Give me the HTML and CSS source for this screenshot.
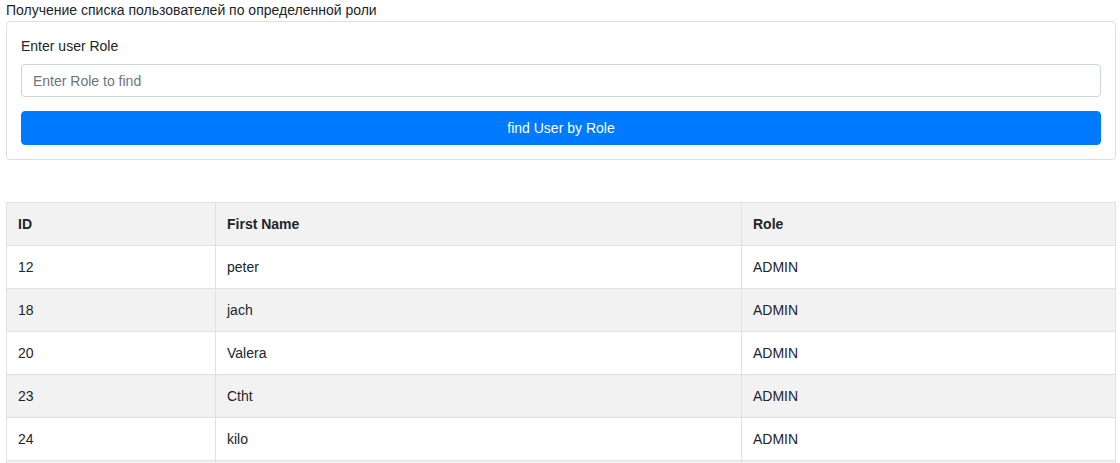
FILE: index.html
```html
<!DOCTYPE html>
<html lang="ru">
<head>
<meta charset="utf-8">
<title>Users by role</title>
<link rel="stylesheet" href="styles.css">
</head>
<body>
<div class="page">
  <div class="title">Получение списка пользователей по определенной роли</div>
  <div class="card">
    <div class="form-group">
      <label class="label" for="role">Enter user Role</label>
      <input class="input" id="role" type="text" placeholder="Enter Role to find">
    </div>
    <button class="btn" type="button">find User by Role</button>
  </div>
  <table class="table">
    <thead>
      <tr><th class="c1">ID</th><th class="c2">First Name</th><th class="c3">Role</th></tr>
    </thead>
    <tbody>
      <tr><td>12</td><td>peter</td><td>ADMIN</td></tr>
      <tr><td>18</td><td>jach</td><td>ADMIN</td></tr>
      <tr><td>20</td><td>Valera</td><td>ADMIN</td></tr>
      <tr><td>23</td><td>Ctht</td><td>ADMIN</td></tr>
      <tr><td>24</td><td>kilo</td><td>ADMIN</td></tr>
      <tr><td>25</td><td>test</td><td>ADMIN</td></tr>
    </tbody>
  </table>
</div>
</body>
</html>
```

FILE: styles.css
```css
html { font-size: 14px; }
* { box-sizing: border-box; }
body {
  margin: 0;
  font-family: "Liberation Sans", Arial, sans-serif;
  font-size: 14px;
  line-height: 1.5;
  color: #212529;
  background: #fff;
}
.page {
  padding: 0 6px;
  width: 1120px;
}
.title {
  line-height: 21px;
  color: #212529;
}
.card {
  width: 1110px;
  border: 1px solid #dcdfe3;
  border-radius: 4px;
  padding: 14px;
}
.form-group {
  margin-bottom: 14px;
}
.label {
  display: block;
  margin-bottom: 7px;
  line-height: 21px;
}
.input {
  display: block;
  width: 100%;
  height: 33px;
  padding: 5px 11px;
  font-family: inherit;
  font-size: 14px;
  color: #495057;
  border: 1px solid #ced4da;
  border-radius: 4px;
  background: #fff;
}
.input::placeholder { color: #6c757d; opacity: 1; }
.btn {
  display: block;
  width: 100%;
  height: 34px;
  border: 1px solid #007bff;
  background: #007bff;
  color: #fff;
  font-family: inherit;
  font-size: 14px;
  border-radius: 4px;
  padding: 0;
}
.table {
  margin-top: 42px;
  width: 1110px;
  border-collapse: collapse;
}
.table th, .table td {
  border: 1px solid #dee2e6;
  padding: 11px 11px 10px;
  text-align: left;
  vertical-align: middle;
  line-height: 21px;
}
.table th { font-weight: bold; background: #f2f2f2; }
.table tbody tr:nth-child(even) td { background: #f2f2f2; }
.c1 { width: 209px; }
.c2 { width: 526px; }
.c3 { width: auto; }
```
